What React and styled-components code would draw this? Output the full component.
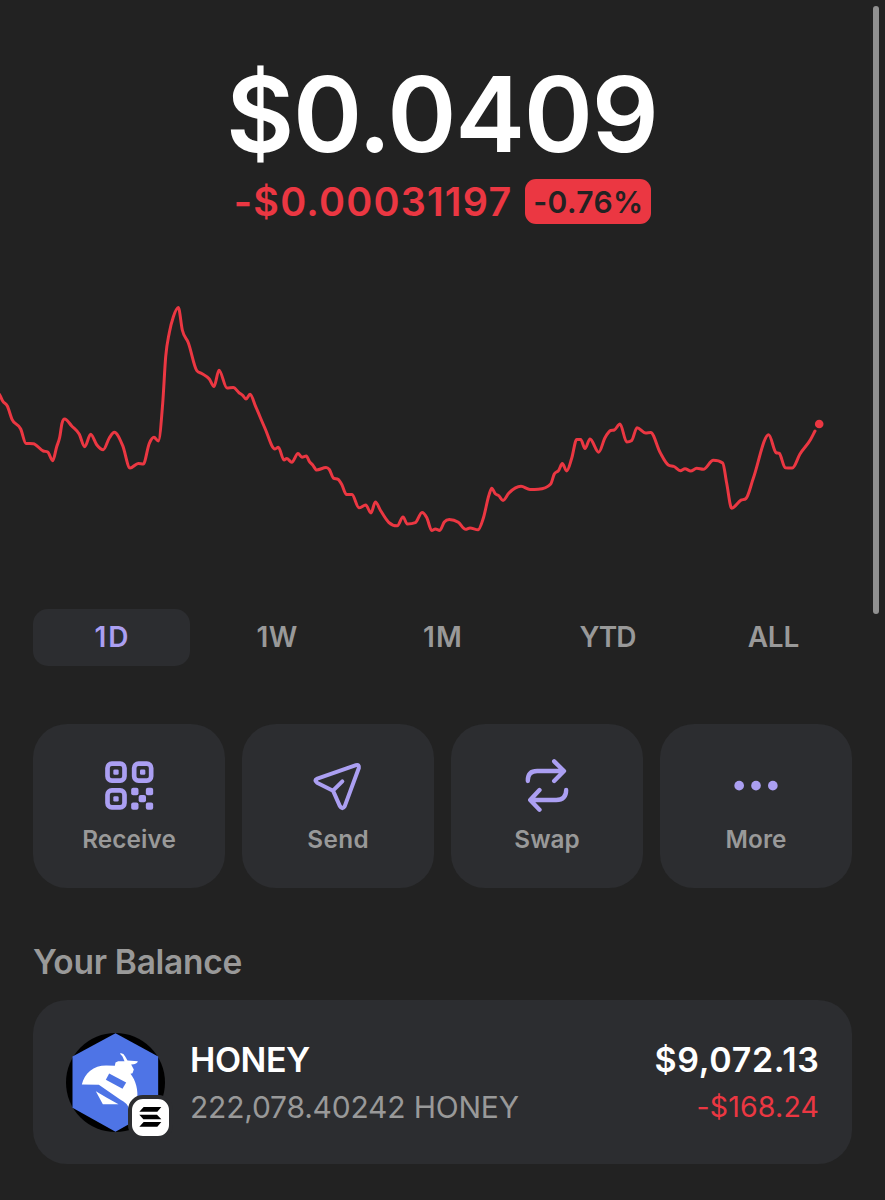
import React from "react";
import styled, { createGlobalStyle } from "styled-components";

const Global = createGlobalStyle`
  *, *::before, *::after { box-sizing: border-box; }
  html, body { margin: 0; background: #222222; }
  body { font-family: Inter, "Liberation Sans", sans-serif; }
`;

const Screen = styled.main`
  position: relative;
  width: 885px;
  height: 1200px;
  overflow: hidden;
  background: #222222;
  color: #ffffff;
`;

const ScrollThumb = styled.div`
  position: absolute;
  top: 6px;
  right: 6px;
  width: 6px;
  height: 608px;
  border-radius: 3px;
  background: #909090;
`;

const Text = styled.span`
  display: block;
  font-size: ${(p) => p.$size}px;
  font-weight: ${(p) => p.$weight || 600};
  letter-spacing: ${(p) => p.$track || 0}px;
  margin-right: ${(p) => -(p.$track || 0)}px;
  color: ${(p) => p.$color || "inherit"};
  white-space: nowrap;
`;

const Header = styled.header`
  display: flex;
  flex-direction: column;
  align-items: center;
  padding-top: 60px;
`;
const Price = styled.div`
  line-height: 108px;
`;
const ChangeRow = styled.div`
  display: flex;
  align-items: flex-start;
  gap: 14px;
  height: 45px;
  margin-top: 11px;
  line-height: 47px;
`;
const Badge = styled.div`
  display: flex;
  justify-content: center;
  width: 126px;
  height: 45px;
  border-radius: 11px;
  background: #eb3742;
`;

const Chart = styled.svg`
  display: block;
  width: 885px;
  height: 385px;
`;

const Tabs = styled.nav`
  display: flex;
  gap: 8.6px;
  padding: 0 33px;
`;
const Tab = styled.div`
  display: flex;
  justify-content: center;
  flex: 1;
  height: 57px;
  border-radius: 15px;
  line-height: 57px;
  color: ${(p) => (p.$active ? "#ab9ff2" : "#999999")};
  background: ${(p) => (p.$active ? "#2c2d30" : "transparent")};
`;

const Actions = styled.div`
  display: flex;
  gap: 17px;
  margin-top: 58px;
  padding: 0 33px;
`;
const Action = styled.div`
  flex: 1;
  display: flex;
  flex-direction: column;
  align-items: center;
  height: 164px;
  padding-top: 34px;
  border-radius: 34px;
  background: #2c2d30;
  color: #999999;
  line-height: 30px;
`;
const ActionIcon = styled.svg`
  display: block;
  width: 55px;
  height: 55px;
  margin-bottom: 11px;
  fill: none;
  stroke: #ab9ff2;
  stroke-linecap: round;
  stroke-linejoin: round;
`;

const SectionTitle = styled.h2`
  display: flex;
  margin: 53px 33px 0;
  line-height: 43px;
`;
const Card = styled.section`
  display: flex;
  align-items: center;
  height: 164px;
  margin: 16px 33px 0;
  padding: 0 33px;
  border-radius: 34px;
  background: #2c2d30;
`;
const Avatar = styled.div`
  position: relative;
  width: 99px;
  height: 99px;
`;
const TokenLogo = styled.svg`
  display: block;
  width: 99px;
  height: 99px;
`;
const ChainBadge = styled.div`
  position: absolute;
  left: 62px;
  top: 62px;
  width: 45px;
  height: 45px;
  border: 4px solid #2c2d30;
  border-radius: 15px;
  background: #ffffff;
`;
const ChainLogo = styled.svg`
  display: block;
  width: 37px;
  height: 37px;
`;
const Lines = styled.div`
  display: flex;
  flex-direction: column;
  align-items: ${(p) => (p.$end ? "flex-end" : "flex-start")};
  margin-left: ${(p) => (p.$end ? "auto" : "25px")};
  margin-top: 4px;
  line-height: 46.6px;
`;

const points = [
  [-4, 390], [0, 395.5], [2.7, 401], [7.3, 406], [12, 419.3], [20.7, 429], [26, 443.5], [33.3, 443.7], [43.3, 451],
  [47.7, 452], [52.7, 460.7], [56.7, 446.7], [59.7, 437.3], [62, 423.3], [64.7, 419], [71.7, 426], [79.3, 434.3],
  [84.7, 446.7], [90.7, 434.3], [96.7, 444.7], [103.3, 449.7], [109.3, 438], [114.3, 432.3], [122.7, 445.7],
  [130, 468], [138.3, 463.5], [143.3, 464], [149.3, 443.3], [154, 437.3], [158.3, 441], [162.7, 403.3],
  [165.7, 356.7], [169.3, 332.7], [173.3, 317], [178.3, 307.5], [182.3, 330], [188.3, 342.7], [196.7, 370.5],
  [201.7, 373.5], [209.3, 379], [214, 386.5], [219, 370.3], [227, 388], [233.3, 387.5], [239, 392.7], [242.7, 395.3],
  [246, 399], [250, 394.3], [255.7, 406.7], [265, 428.3], [275, 449], [278.3, 447.3], [284, 460], [286.7, 458.6],
  [291.8, 462.2], [298, 453.5], [302, 457.2], [306.3, 456], [309.3, 461.3], [312.7, 465], [316.7, 470], [326, 467.5],
  [329.3, 469.5], [333.3, 478], [338.3, 479.5], [342, 485], [346.3, 494.4], [352, 494.6], [359, 507.8], [365.7, 505],
  [371, 513], [375.3, 502], [380.7, 510.7], [388.7, 522.3], [397.3, 525.8], [403, 517], [407.3, 524], [415.3, 522.7],
  [422, 512.5], [426.7, 517.5], [431.7, 530.4], [435.3, 528.9], [439.7, 530.4], [444.3, 522], [449.3, 519.5],
  [458.3, 522.3], [465.7, 529.3], [470, 527.9], [478, 529.8], [483.3, 518.3], [489, 495], [491.7, 488.2], [495.3, 493.8],
  [498.7, 495.7], [503, 500.4], [508.7, 493.3], [521, 486.3], [530, 489.5], [538.3, 489.3], [550.7, 484], [554.3, 474],
  [558.7, 470.3], [562.3, 463.6], [566.7, 471], [571.7, 458.3], [576.7, 439.5], [580.7, 439.5], [585, 448.5],
  [590, 439], [598.7, 452.2], [605, 437.7], [610.7, 430.5], [614.3, 430], [620, 424], [626.7, 442], [631.7, 440.5],
  [637, 427.7], [645.7, 433], [650.7, 432.5], [660, 452.3], [668.3, 465], [674, 466.5], [680.3, 470.7], [685, 468.7],
  [690.7, 471], [696.7, 468.3], [703.3, 469.3], [713.3, 460.3], [722.7, 463], [726.7, 483.3], [731.7, 508.3],
  [741, 500.2], [746, 498.5], [753.3, 478.3], [768.7, 434.8], [776, 452.6], [779.3, 453.4], [785.3, 467.8],
  [792.3, 468], [800, 454], [810.7, 439.3], [815, 431],
];

// Monotone cubic interpolation keeps every local peak at its data point.
function monotonePath(pts) {
  const n = pts.length;
  const slope = (i) => (pts[i + 1][1] - pts[i][1]) / (pts[i + 1][0] - pts[i][0]);
  const m = pts.map((p, i) => {
    if (i === 0) return slope(0);
    if (i === n - 1) return slope(n - 2);
    const a = slope(i - 1);
    const b = slope(i);
    if (a * b <= 0) return 0;
    const h0 = p[0] - pts[i - 1][0];
    const h1 = pts[i + 1][0] - p[0];
    const c = (a * h1 + b * h0) / (h0 + h1);
    return Math.sign(a) * Math.min(Math.abs(c), 2.5 * Math.abs(a), 2.5 * Math.abs(b));
  });
  let d = `M${pts[0][0]} ${pts[0][1]}`;
  for (let i = 0; i < n - 1; i++) {
    const [x0, y0] = pts[i];
    const [x1, y1] = pts[i + 1];
    const t = (x1 - x0) / 3;
    d += `C${(x0 + t).toFixed(2)} ${(y0 + t * m[i]).toFixed(2)} ${(x1 - t).toFixed(2)} ${(y1 - t * m[i + 1]).toFixed(2)} ${x1} ${y1}`;
  }
  return d;
}

const ranges = [
  { label: "1D", track: 2 },
  { label: "1W", track: 0.5 },
  { label: "1M", track: 1.1 },
  { label: "YTD", track: -1 },
  { label: "ALL", track: -0.3 },
];

const finders = [[287.5, 171.5], [367.5, 171.5], [287.5, 251.5]];
const modules = [[344, 229.5], [388, 229.5], [366.5, 251], [344, 273.5], [388, 273.5]];

const actions = [
  {
    label: "Receive",
    track: 0.13,
    viewBox: "245.500 129 165 165",
    icon: (
      <>
        {finders.map(([x, y]) => (
          <g key={`${x}-${y}`}>
            <rect x={x - 25.5} y={y - 25.5} width="51" height="51" rx="13" strokeWidth="14" />
            <rect x={x - 8} y={y - 8} width="16" height="16" rx="4" fill="#ab9ff2" stroke="none" />
          </g>
        ))}
        {modules.map(([x, y]) => (
          <rect key={`${x}-${y}`} x={x - 11} y={y - 11} width="22" height="22" rx="6" fill="#ab9ff2" stroke="none" />
        ))}
      </>
    ),
  },
  {
    label: "Send",
    track: 0.4,
    viewBox: "873 129 165 165",
    icon: (
      <path
        strokeWidth="12"
        d="M1008 150.500L892 191Q881 196 891 203L939 227L960 274Q967 286 974 274L1016.500 159Q1018 147 1008 150.500ZM939 227L967 199"
      />
    ),
  },
  {
    label: "Swap",
    track: 0,
    viewBox: "239.500 129 165 165",
    icon: (
      <path
        strokeWidth="13"
        d="M263 198V196Q263 168 291 168H370M342 139L371.500 168L342 198M378 225Q378 255 348 255H271M298 225L270 255L298 284"
      />
    ),
  },
  {
    label: "More",
    track: 0.1,
    viewBox: "867.500 129 165 165",
    icon: [898, 948.5, 999].map((x) => <circle key={x} cx={x} cy="212" r="14.500" fill="#ab9ff2" stroke="none" />),
  },
];

export default function App() {
  return (
    <>
      <Global />
      <Screen>
        <Header>
          <Price><Text $size={105} $track={-1.33}>$0.0409</Text></Price>
          <ChangeRow>
            <Text $size={39.5} $track={1.17} $color="#eb3742">-$0.00031197</Text>
            <Badge><Text $size={30} $track={0.4} $color="#222222">-0.76%</Text></Badge>
          </ChangeRow>
        </Header>
        <Chart viewBox="0 224 885 385">
          <path d={monotonePath(points)} fill="none" stroke="#eb3742" strokeWidth="3" strokeLinecap="round" strokeLinejoin="round" />
          <circle cx="819.200" cy="424" r="4.300" fill="#eb3742" />
        </Chart>
        <Tabs>
          {ranges.map((r, i) => (
            <Tab key={r.label} $active={i === 0}><Text $size={28} $track={r.track}>{r.label}</Text></Tab>
          ))}
        </Tabs>
        <Actions>
          {actions.map((a) => (
            <Action key={a.label}>
              <ActionIcon viewBox={a.viewBox}>{a.icon}</ActionIcon>
              <Text $size={24.3} $track={a.track}>{a.label}</Text>
            </Action>
          ))}
        </Actions>
        <SectionTitle><Text $size={33.5} $track={-0.28} $color="#999999">Your Balance</Text></SectionTitle>
        <Card>
          <Avatar>
            <TokenLogo viewBox="47.500 37.500 297 297">
              <circle cx="196" cy="186" r="148.500" fill="#000000" />
              <path d="M196 38L324 108V262L196 334L67 262V108Z" fill="#4e74e6" />
              <path d="M95 192C103 158 130 135 168 135L194 136L196 126L204 122H223L217 108L209 99Q219 96 225 108L232 120L263 122Q262 131 243 132L251 147L247 158L241 160C257 180 265 210 261 240L236 264Q232 248 210 237L146 193Z" fill="#ffffff" />
              <path d="M177 159L228 186L217 205L167 178Z" fill="#4e74e6" />
              <path d="M137 212L170 232L205 251H158Z" fill="#ffffff" />
            </TokenLogo>
            <ChainBadge>
              <ChainLogo viewBox="246 237 111 111">
                <path d="M281 261H334L322 275H268ZM268 284H321L334 298H280ZM281 306H334L322 320H268Z" fill="#000000" />
              </ChainLogo>
            </ChainBadge>
          </Avatar>
          <Lines>
            <Text $size={34} $track={-0.45}>HONEY</Text>
            <Text $size={30} $weight={400} $track={-0.2} $color="#999999">222,078.40242 HONEY</Text>
          </Lines>
          <Lines $end>
            <Text $size={34} $track={0.67}>$9,072.13</Text>
            <Text $size={28.5} $weight={400} $track={0.2} $color="#eb3742">-$168.24</Text>
          </Lines>
        </Card>
        <ScrollThumb />
      </Screen>
    </>
  );
}
